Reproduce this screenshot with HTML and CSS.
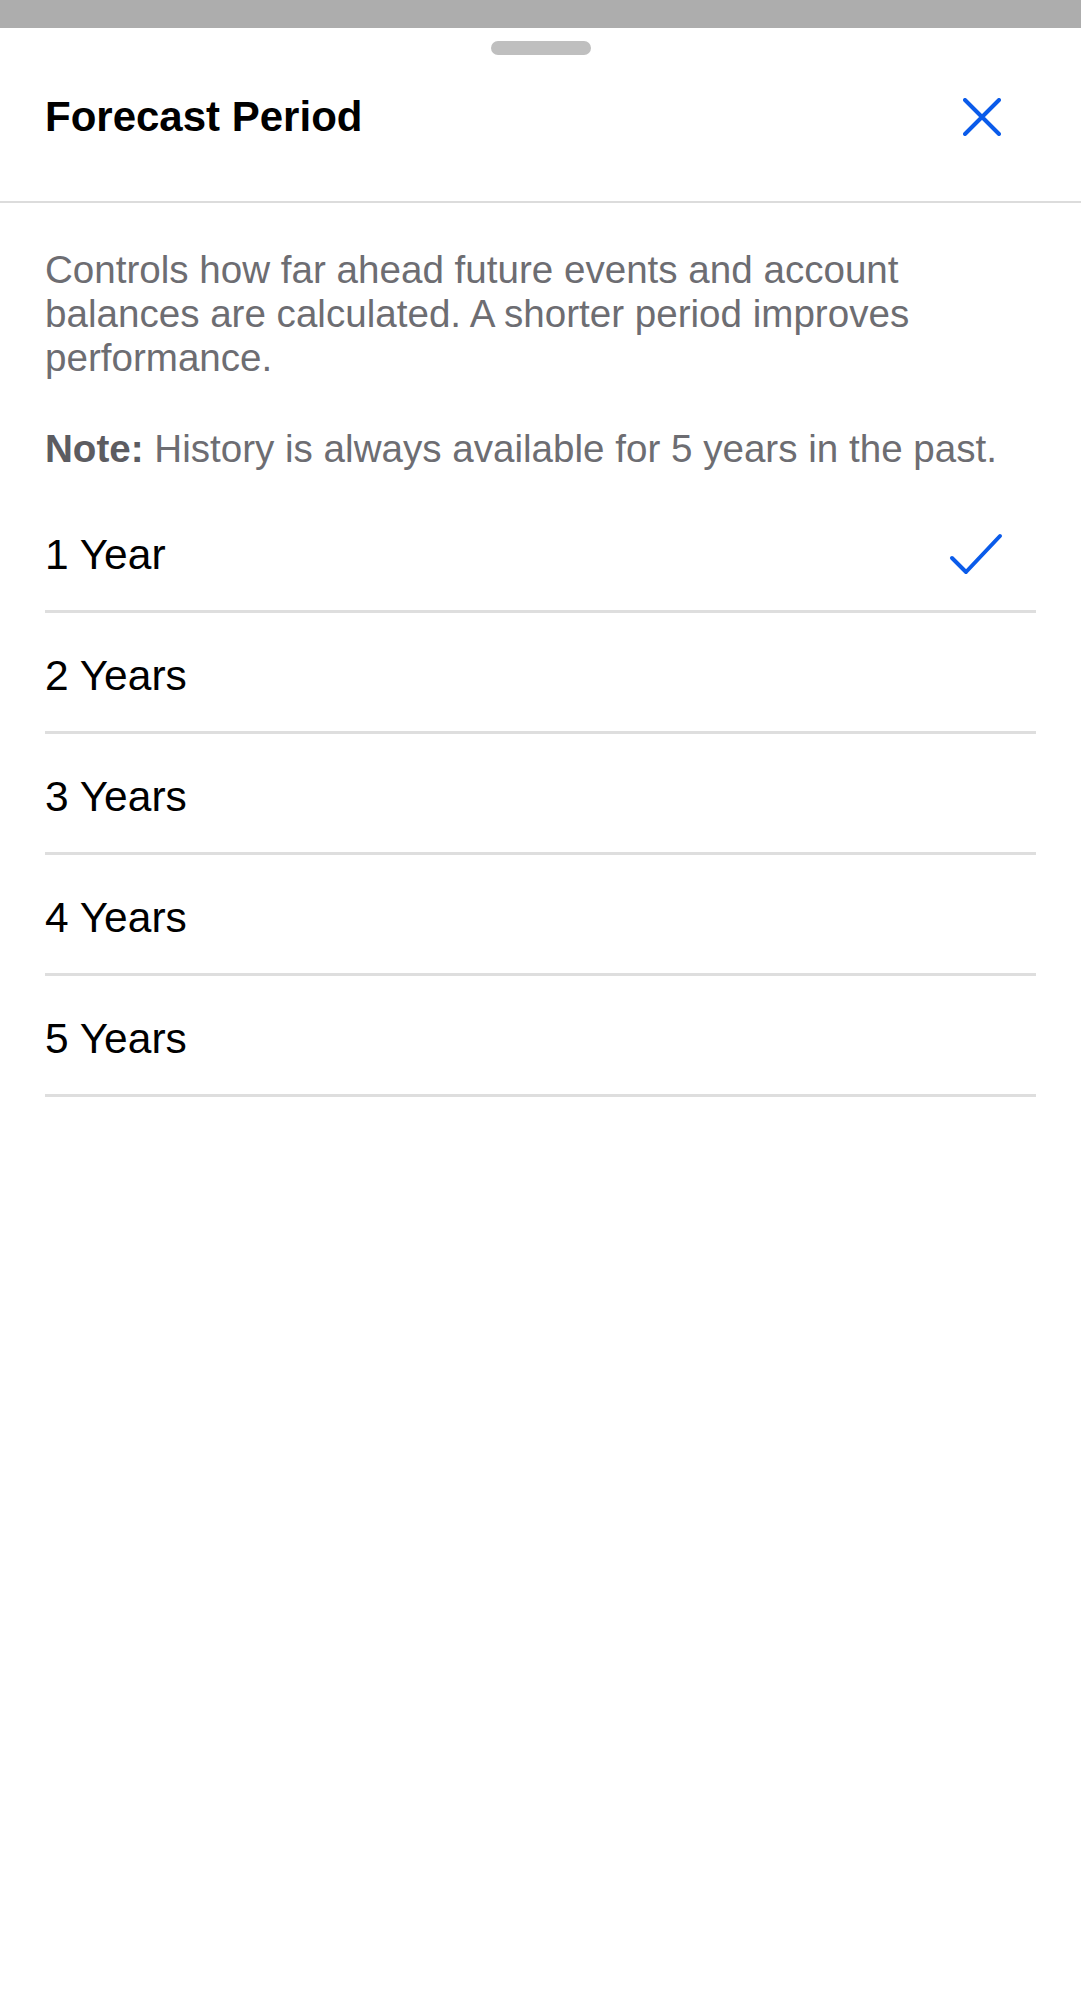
FILE: index.html
```html
<!DOCTYPE html>
<html>
<head>
    <title>Forecast Period</title>
    <link rel="stylesheet" href="styles.css">
</head>
<body>
    <div class="status_bar"></div>
    <div class="sheet">
        <div class="handle"></div>
        <div class="header">
            <h1 class="titre">Forecast Period</h1>
            <svg class="bouton_fermer" width="38" height="38" viewBox="0 0 38 38">
                <path d="M2 2 L36 36 M36 2 L2 36" stroke="#0a5bea" stroke-width="4" stroke-linecap="round" fill="none"/>
            </svg>
        </div>
        <div class="contenu">
            <p class="description">Controls how far ahead future events and account balances are calculated. A shorter period improves performance.</p>
            <p class="note"><b>Note:</b> History is always available for 5 years in the past.</p>

            <ul class="liste_periodes">
                <li class="periode">
                    <span>1 Year</span>
                    <svg class="coche" width="54" height="44" viewBox="0 0 54 44">
                        <path d="M3 25 L17 39 L51 3" stroke="#0a5bea" stroke-width="4" stroke-linecap="round" stroke-linejoin="round" fill="none"/>
                    </svg>
                </li>
                <li class="periode"><span>2 Years</span></li>
                <li class="periode"><span>3 Years</span></li>
                <li class="periode"><span>4 Years</span></li>
                <li class="periode"><span>5 Years</span></li>
            </ul>
        </div>
    </div>
</body>
</html>
```

FILE: styles.css
```css
body {
    margin: 0;
    background-color: #ffffff;
    font-family: "Liberation Sans", Arial, sans-serif;
    color: #000000;
}
.status_bar {
    height: 28px;
    background-color: #adadad;
}
.sheet {
    background-color: #ffffff;
}
.handle {
    width: 100px;
    height: 14px;
    margin: 13px auto 0;
    border-radius: 7px;
    background-color: #bfbfbf;
}
.header {
    display: flex;
    align-items: center;
    justify-content: space-between;
    padding: 37px 80px 59px 45px;
    border-bottom: 2px solid #dcdcdc;
}
.titre {
    margin: 0;
    font-size: 42px;
    line-height: 50px;
    font-weight: bold;
}
.bouton_fermer {
    display: block;
}
.contenu {
    padding: 0 45px;
}
.description {
    margin: 45px 0 0;
    font-size: 38.6px;
    line-height: 44px;
    color: #6d6d72;
}
.note {
    margin: 47px 0 0;
    font-size: 38.6px;
    line-height: 44px;
    color: #6d6d72;
}
.note b {
    color: #5c5c61;
}
.liste_periodes {
    list-style: none;
    margin: 21px 0 0;
    padding: 0;
}
.periode {
    display: flex;
    align-items: center;
    justify-content: space-between;
    height: 110px;
    padding-top: 8px;
    padding-right: 33px;
    border-bottom: 3px solid #dedede;
    font-size: 42.5px;
}
.coche {
    display: block;
}
```
